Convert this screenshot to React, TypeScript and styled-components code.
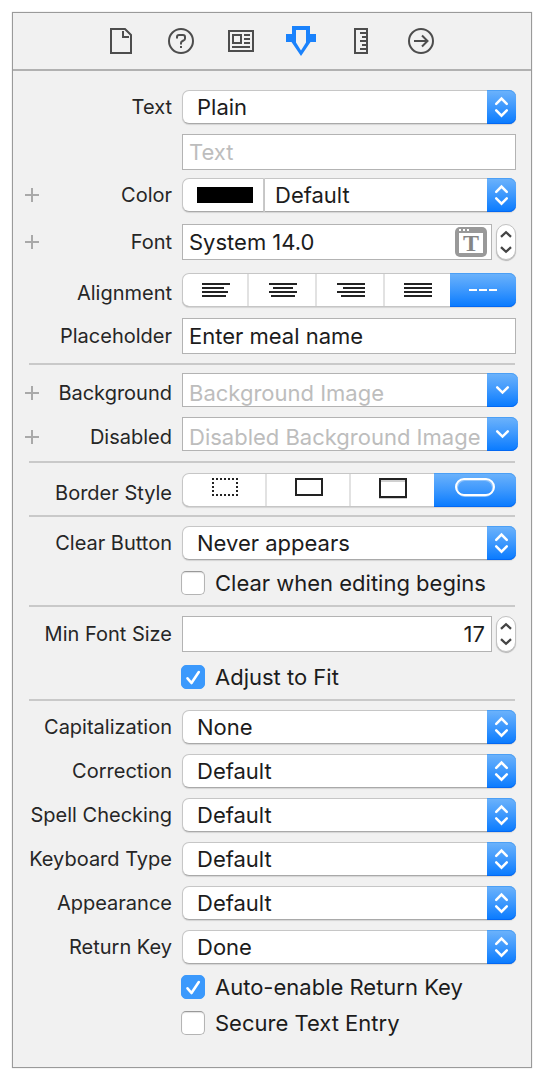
import React from "react";
import styled, { createGlobalStyle, css } from "styled-components";

const blue = "linear-gradient(#6db3fb, #3d98fd 50%, #087aff)";

const GlobalStyle = createGlobalStyle`
  *, *::before, *::after { box-sizing: border-box; }
  body { margin: 0; background: #fff; }
  body, input, select, button { font-family: Inter, Roboto, "Liberation Sans", sans-serif; }
  button { appearance: none; border: 0; padding: 0; margin: 0; background: none; }
  svg { display: block; }
`;

const Panel = styled.main`
  margin: 12px;
  border: 1px solid #9a9a9a;
  background: #f1f1f1;
  box-shadow: 0 0 1px #bbb;
`;

const Toolbar = styled.nav`
  display: flex;
  justify-content: center;
  height: 58px;
  padding-right: 2px;
  border-bottom: 2px solid #b1b1b1;
`;

const Tab = styled.button`
  display: flex;
  align-items: center;
  justify-content: center;
  width: 60px;
  color: #4d4d4d;
  &[aria-pressed="true"] { color: #1a82fc; }
`;

const Form = styled.form`
  padding: 19px 0 32px;
`;

const Row = styled.div<{ $gap?: number }>`
  display: grid;
  grid-template-columns: 160px minmax(0, 1fr);
  column-gap: 9px;
  align-items: center;
  margin-top: ${(p) => p.$gap ?? 10}px;
  padding-right: 15px;
  &:first-child { margin-top: 0; }
`;

const LabelCell = styled.div<{ $low?: boolean }>`
  display: flex;
  align-items: center;
  padding: ${(p) => (p.$low ? 5 : 0)}px 1px 0 12px;
`;

const AddButton = styled.button`
  width: 14px;
  height: 14px;
  color: #a9a9a9;
`;

const Label = styled.label`
  margin-left: auto;
  font-size: 20px;
  line-height: 24px;
  white-space: nowrap;
  color: #262626;
`;

const Divider = styled.hr<{ $gap?: number }>`
  height: 2px;
  margin: ${(p) => p.$gap ?? 10}px 16px 0;
  border: 0;
  background: #c9c9c9;
`;

const raised = css`
  border: 1px solid #c6c6c6;
  border-bottom-color: #a9a9a9;
  border-radius: 7px;
  background: #fff;
  box-shadow: 0 1px 1px rgba(0, 0, 0, 0.12);
`;

const SelectBox = styled.div`
  display: grid;
  flex: 1;
  > * { grid-area: 1 / 1; }
`;

const Select = styled.select<{ $joined?: boolean }>`
  ${raised}
  appearance: none;
  width: 100%;
  height: 34px;
  padding: 0 32px 0 ${(p) => (p.$joined ? 10 : 14)}px;
  font-size: 22px;
  color: #1c1c1c;
  ${(p) => p.$joined && "border-left: 0; border-radius: 0 7px 7px 0;"}
`;

const cap = css`
  flex: none;
  height: 34px;
  border-radius: 0 7px 7px 0;
  background: ${blue};
  box-shadow: inset 0 1px #4b9ff5, inset 0 -1px #0468f2;
  color: #fff;
`;

const SelectCap = styled.span`
  ${cap}
  justify-self: end;
  width: 29px;
  pointer-events: none;
`;

const Group = styled.div`
  display: flex;
`;

const SwatchCell = styled.div`
  ${raised}
  display: flex;
  align-items: center;
  width: 83px;
  height: 34px;
  padding-left: 14px;
  border-right: 2px solid #c9c9c9;
  border-radius: 7px 0 0 7px;
`;

const Swatch = styled.input`
  appearance: none;
  width: 56px;
  height: 16px;
  padding: 0;
  border: 0;
  background: none;
  &::-webkit-color-swatch-wrapper { padding: 0; }
  &::-webkit-color-swatch { border: 0; border-radius: 0; }
`;

const Field = styled.div<{ $short?: boolean }>`
  display: flex;
  flex: 1;
  align-items: center;
  min-width: 0;
  height: ${(p) => (p.$short ? 34 : 36)}px;
  ${(p) => p.$short && "padding-top: 5px;"}
  border: 1px solid #b3b3b3;
  ${(p) => p.$short && "border-right: 0;"}
  background: #fff;
`;

const TextInput = styled.input<{ $end?: boolean }>`
  flex: 1;
  min-width: 0;
  height: 100%;
  padding: 0 6px;
  border: 0;
  background: none;
  font-size: 22px;
  text-align: ${(p) => (p.$end ? "right" : "left")};
  color: #1c1c1c;
  &::placeholder { color: #bdbdbd; opacity: 1; }
`;

const ComboInput = styled(TextInput)`
  padding-right: 0;
`;

const FontButton = styled.button`
  flex: none;
  width: 32px;
  height: 30px;
  margin-right: 4px;
`;

const ComboGroup = styled(Group)`
  margin-right: -2px;
`;

const ComboButton = styled.button`
  ${cap}
  width: 31px;
`;

const StepperBox = styled.div`
  display: flex;
  flex: none;
  flex-direction: column;
  width: 20px;
  height: 36px;
  margin-left: 4px;
  border: 1px solid #c2c2c2;
  border-radius: 10px;
  background: #fff;
  box-shadow: 0 1px 1px rgba(0, 0, 0, 0.25);
`;

const StepButton = styled.button`
  height: 17px;
  color: #444;
`;

const Segments = styled.div<{ $columns: string }>`
  display: grid;
  grid-template-columns: ${(p) => p.$columns};
  height: 34px;
  border-radius: 7px;
  background: #fff;
  box-shadow: inset 0 0 0 1px #c6c6c6, inset 0 -1px #a9a9a9, 0 1px 1px rgba(0, 0, 0, 0.12);
`;

const Segment = styled.button`
  display: flex;
  align-items: center;
  justify-content: center;
  height: 34px;
  color: #222;
  background: linear-gradient(#e2e2e2, #e2e2e2) right center / 2px 32px no-repeat;
  &:nth-last-child(2) { background: none; }
  &[aria-pressed="true"] {
    border-radius: 0 7px 7px 0;
    color: #fff;
    background: ${blue};
    box-shadow: inset 0 1px #4b9ff5, inset 0 -1px #0468f2;
  }
`;

const CheckLabel = styled.label`
  display: flex;
  grid-column: 2;
  align-items: center;
  gap: 10px;
  height: 24px;
  margin-left: -1px;
  font-size: 22px;
  white-space: nowrap;
  color: #1c1c1c;
`;

const CheckBox = styled.span`
  display: grid;
  > * { grid-area: 1 / 1; }
  svg { pointer-events: none; color: #fff; }
  input:not(:checked) + svg { visibility: hidden; }
`;

const CheckInput = styled.input`
  appearance: none;
  width: 24px;
  height: 24px;
  margin: 0;
  border: 1px solid #b4b4b4;
  border-top-color: #999;
  border-radius: 5px;
  background: #fff;
  box-shadow: inset 0 1px 1px #e2e2e2;
  &:checked { border-color: #3b99fc; background: #3b99fc; box-shadow: none; }
`;

const slug = (s: string) => s.toLowerCase().replace(/\s+/g, "-");

function RowLabel({ text, add, low }: { text: string; add?: boolean; low?: boolean }) {
  return (
    <LabelCell $low={low}>
      {add && (
        <AddButton type="button" aria-label={`Add ${text} variation`}>
          <svg width="14" height="14" stroke="currentColor" strokeWidth="2"><path d="M7 0v14M0 7h14" /></svg>
        </AddButton>
      )}
      <Label htmlFor={slug(text)}>{text}</Label>
    </LabelCell>
  );
}

function PopUp({ id, value, joined }: { id: string; value: string; joined?: boolean }) {
  return (
    <SelectBox>
      <Select id={id} defaultValue={value} $joined={joined}>
        <option>{value}</option>
      </Select>
      <SelectCap>
        <svg width="29" height="34" fill="none" stroke="currentColor" strokeWidth="2.5" strokeLinecap="round">
          <path d="M9.2 13.8l5.3-5.3 5.3 5.3M9.2 20.4l5.3 5.3 5.3-5.3" />
        </svg>
      </SelectCap>
    </SelectBox>
  );
}

function SelectRow({ label, value, gap }: { label: string; value: string; gap?: number }) {
  return (
    <Row $gap={gap}>
      <RowLabel text={label} />
      <PopUp id={slug(label)} value={value} />
    </Row>
  );
}

function ComboRow({ label, hint, gap }: { label: string; hint: string; gap?: number }) {
  return (
    <Row $gap={gap}>
      <RowLabel text={label} add low />
      <ComboGroup>
        <Field $short><ComboInput id={slug(label)} placeholder={hint} /></Field>
        <ComboButton type="button" aria-label={`Choose ${hint}`}>
          <svg width="31" height="34" fill="none" stroke="currentColor" strokeWidth="2.5" strokeLinecap="round">
            <path d="M10.2 14.3l5.3 5.3 5.3-5.3" />
          </svg>
        </ComboButton>
      </ComboGroup>
    </Row>
  );
}

function Stepper() {
  return (
    <StepperBox>
      <StepButton type="button" aria-label="Increase">
        <svg width="18" height="17" fill="none" stroke="currentColor" strokeWidth="2.3"><path d="M4 11.8l5-4.6 5 4.6" /></svg>
      </StepButton>
      <StepButton type="button" aria-label="Decrease">
        <svg width="18" height="17" fill="none" stroke="currentColor" strokeWidth="2.3"><path d="M4 5.2l5 4.6 5-4.6" /></svg>
      </StepButton>
    </StepperBox>
  );
}

function CheckRow({ label, checked, gap }: { label: string; checked?: boolean; gap?: number }) {
  return (
    <Row $gap={gap}>
      <CheckLabel>
        <CheckBox>
          <CheckInput type="checkbox" defaultChecked={checked} />
          <svg width="24" height="24" fill="none" stroke="currentColor" strokeWidth="2.6" strokeLinecap="round" strokeLinejoin="round">
            <path d="M6.5 13.3l4 4.7L17.8 7" />
          </svg>
        </CheckBox>
        {label}
      </CheckLabel>
    </Row>
  );
}

const tabs = [
  { name: "File", icon: (
    <svg width="22" height="26" fill="none" stroke="currentColor" strokeWidth="2">
      <path d="M1 1h14l6 6v18H1z" /><path d="M13 3v6h6" />
    </svg>
  ) },
  { name: "Quick Help", icon: (
    <svg width="26" height="26" fill="none" stroke="currentColor" strokeWidth="2">
      <circle cx="13" cy="13" r="12" /><path d="M9 10.500V9q0-2 2-2h4q2 0 2 2v1.500q0 1.500-1.500 2l-1 .5q-1.500.7-1.500 2V16.500M13 18v2" />
    </svg>
  ) },
  { name: "Identity", icon: (
    <svg width="26" height="22" fill="none" stroke="currentColor" strokeWidth="2">
      <path d="M1 1h24v20H1zM5 5h8v8H5zM16 5h6M16 9h6M16 13h6M4 17h18" />
    </svg>
  ) },
  { name: "Attributes", active: true, icon: (
    <svg width="30" height="30">
      <path fill="currentColor" fillRule="evenodd" d="M6 0h18v8h6v8h-5.500L15 30 5.500 16H0V8h6zM10 4v12.500l5 8 5-8V4z" />
    </svg>
  ) },
  { name: "Size", icon: (
    <svg width="14" height="26" fill="none" stroke="currentColor" strokeWidth="2">
      <path d="M1 1h12v24H1zM6 5h7M8 9h5M6 13h7M8 17h5M6 21h7" />
    </svg>
  ) },
  { name: "Connections", icon: (
    <svg width="26" height="26" fill="none" stroke="currentColor" strokeWidth="2">
      <circle cx="13" cy="13" r="12" /><path d="M6 13h13M14 7.500l5.500 5.500-5.500 5.500" />
    </svg>
  ) },
];

const alignments = [
  { name: "Left", d: "M0 1h28M0 5h22M0 9h26M0 13h24" },
  { name: "Center", d: "M0 1h28M4 5h20M0 9h28M2 13h24" },
  { name: "Right", d: "M0 1h28M6 5h22M0 9h28M4 13h24" },
  { name: "Justified", d: "M0 1h28M0 5h28M0 9h28M0 13h28" },
  { name: "Natural", d: "M0 7h8M10 7h8M20 7h8" },
];

const borders = [
  { name: "None", icon: <path d="M7 6h26M7 22h26M8 9v12M32 9v12" strokeDasharray="2 2" /> },
  { name: "Line", icon: <path d="M7 6h26v16H7z" /> },
  { name: "Bezel", icon: <><path d="M8 8h24M6 25h28" stroke="#d0d0d0" /><path d="M7 6h26v18H7z" /></> },
  { name: "Rounded", icon: <><rect x="2" y="7" width="36" height="16" rx="8" stroke="#8cc2fc" /><rect x="1" y="6" width="38" height="16" rx="8" /></> },
];

export default function App() {
  return (
    <>
      <GlobalStyle />
      <Panel>
        <Toolbar aria-label="Inspectors">
          {tabs.map((t) => (
            <Tab key={t.name} type="button" aria-label={t.name} aria-pressed={!!t.active}>{t.icon}</Tab>
          ))}
        </Toolbar>
        <Form>
          <SelectRow label="Text" value="Plain" />
          <Row>
            <span />
            <Field><TextInput aria-label="Text value" placeholder="Text" /></Field>
          </Row>
          <Row $gap={8}>
            <RowLabel text="Color" add />
            <Group>
              <SwatchCell><Swatch type="color" aria-label="Color swatch" defaultValue="#000000" /></SwatchCell>
              <PopUp id="color" value="Default" joined />
            </Group>
          </Row>
          <Row $gap={12}>
            <RowLabel text="Font" add />
            <Group>
              <Field>
                <TextInput id="font" defaultValue="System 14.0" />
                <FontButton type="button" aria-label="Choose font">
                  <svg width="32" height="30">
                    <rect width="32" height="30" rx="5" fill="#999" />
                    <path fill="#fff" d="M4 6h24v20H4zM4 2h2v2H4zM8 2h2v2H8zM12 2h2v2h-2z" />
                    <text x="16" y="24" textAnchor="middle" fontFamily="Liberation Serif, serif" fontWeight="700" fontSize="24" fill="#858585">T</text>
                  </svg>
                </FontButton>
              </Field>
              <Stepper />
            </Group>
          </Row>
          <Row $gap={13}>
            <RowLabel text="Alignment" low />
            <Segments id="alignment" role="group" aria-label="Alignment" $columns="67fr 68fr 68fr 65fr 66fr">
              {alignments.map((a) => (
                <Segment key={a.name} type="button" aria-label={a.name} aria-pressed={a.name === "Natural"}>
                  <svg width="28" height="14" stroke="currentColor" strokeWidth="2"><path d={a.d} /></svg>
                </Segment>
              ))}
            </Segments>
          </Row>
          <Row $gap={11}>
            <RowLabel text="Placeholder" />
            <Field><TextInput id="placeholder" defaultValue="Enter meal name" /></Field>
          </Row>
          <Divider $gap={9} />
          <ComboRow label="Background" hint="Background Image" gap={8} />
          <ComboRow label="Disabled" hint="Disabled Background Image" />
          <Divider />
          <Row>
            <RowLabel text="Border Style" low />
            <Segments id="border-style" role="group" aria-label="Border Style" $columns="85fr 84fr 83fr 82fr">
              {borders.map((b) => (
                <Segment key={b.name} type="button" aria-label={b.name} aria-pressed={b.name === "Rounded"}>
                  <svg width="40" height="34" fill="none" stroke="currentColor" strokeWidth="2">{b.icon}</svg>
                </Segment>
              ))}
            </Segments>
          </Row>
          <Divider $gap={8} />
          <SelectRow label="Clear Button" value="Never appears" gap={9} />
          <CheckRow label="Clear when editing begins" gap={11} />
          <Divider />
          <Row $gap={9}>
            <RowLabel text="Min Font Size" />
            <Group>
              <Field><TextInput id="min-font-size" defaultValue="17" $end /></Field>
              <Stepper />
            </Group>
          </Row>
          <CheckRow label="Adjust to Fit" checked gap={13} />
          <Divider />
          <SelectRow label="Capitalization" value="None" gap={9} />
          <SelectRow label="Correction" value="Default" />
          <SelectRow label="Spell Checking" value="Default" />
          <SelectRow label="Keyboard Type" value="Default" />
          <SelectRow label="Appearance" value="Default" />
          <SelectRow label="Return Key" value="Done" />
          <CheckRow label="Auto-enable Return Key" checked gap={11} />
          <CheckRow label="Secure Text Entry" gap={12} />
        </Form>
      </Panel>
    </>
  );
}
